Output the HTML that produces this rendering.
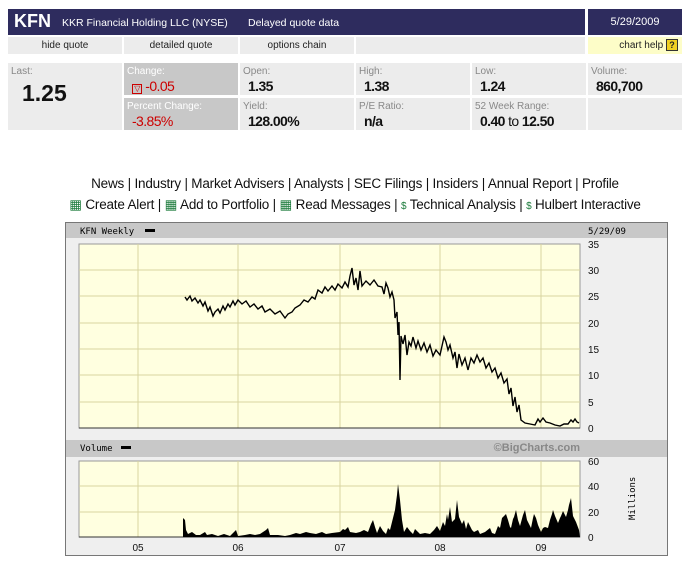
<!DOCTYPE html>
<html><head><meta charset="utf-8"><style>
*{margin:0;padding:0;box-sizing:border-box}
body{width:682px;height:566px;background:#fff;font-family:"Liberation Sans",sans-serif;position:relative;overflow:hidden}
.a{position:absolute}
.hdr{left:8px;top:9px;width:577px;height:26px;background:#2e2c5e;color:#fff}
.dt{left:588px;top:9px;width:94px;height:26px;background:#2e2c5e;color:#fff;font-size:11px;text-align:center;line-height:26px}
.nav{top:37px;height:17px;background:#ececec;font-size:10px;color:#222;text-align:center;line-height:17px}
.cell{background:#ececec;height:32px}
.lbl{font-size:10px;color:#888;position:absolute;left:3px;top:3px}
.val{font-size:14px;color:#111;position:absolute;left:8px;top:15px;font-weight:bold;letter-spacing:-0.6px}
.links{left:14px;width:682px;text-align:center;font-size:13.5px;color:#111;letter-spacing:-0.2px}
.mono{font-family:"DejaVu Sans Mono","Liberation Mono",monospace;font-size:9px;color:#111}
.g{color:#1a7a3a}
</style></head><body>
<div class="a hdr"><span style="position:absolute;left:6px;top:2px;font-size:18px;font-weight:bold">KFN</span><span style="position:absolute;left:54px;top:8px;font-size:10.5px">KKR Financial Holding LLC (NYSE)</span><span style="position:absolute;left:240px;top:8px;font-size:10.5px">Delayed quote data</span></div>
<div class="a dt">5/29/2009</div>
<div class="a nav" style="left:8px;width:114px">hide quote</div>
<div class="a nav" style="left:124px;width:114px">detailed quote</div>
<div class="a nav" style="left:240px;width:114px">options chain</div>
<div class="a nav" style="left:356px;width:229px"></div>
<div class="a nav" style="left:588px;width:94px;background:#fdfdc8;text-align:right;padding-right:4px">chart help <span style="display:inline-block;width:12px;height:12px;background:#f0d020;border:1px solid #333;font-weight:bold;font-size:9px;line-height:10px;text-align:center;vertical-align:middle">?</span></div>

<div class="a cell" style="left:8px;top:63px;width:114px;height:67px"><span class="lbl">Last:</span><span style="position:absolute;left:14px;top:17px;font-size:23px;font-weight:bold;color:#111">1.25</span></div>
<div class="a cell" style="left:124px;top:63px;width:114px;background:#c8c8c8"><span class="lbl" style="color:#fff">Change:</span><span class="val" style="color:#c00;font-weight:normal"><span style="display:inline-block;width:10px;height:10px;border:1px solid #c00;font-size:8px;line-height:8px;text-align:center">▽</span> -0.05</span></div>
<div class="a cell" style="left:124px;top:98px;width:114px;background:#c8c8c8"><span class="lbl" style="color:#fff">Percent Change:</span><span class="val" style="color:#c00;font-weight:normal">-3.85%</span></div>
<div class="a cell" style="left:240px;top:63px;width:114px"><span class="lbl">Open:</span><span class="val">1.35</span></div>
<div class="a cell" style="left:240px;top:98px;width:114px"><span class="lbl">Yield:</span><span class="val">128.00%</span></div>
<div class="a cell" style="left:356px;top:63px;width:114px"><span class="lbl">High:</span><span class="val">1.38</span></div>
<div class="a cell" style="left:356px;top:98px;width:114px"><span class="lbl">P/E Ratio:</span><span class="val">n/a</span></div>
<div class="a cell" style="left:472px;top:63px;width:114px"><span class="lbl">Low:</span><span class="val">1.24</span></div>
<div class="a cell" style="left:472px;top:98px;width:114px"><span class="lbl">52 Week Range:</span><span class="val">0.40 <span style="font-weight:normal">to</span> 12.50</span></div>
<div class="a cell" style="left:588px;top:63px;width:94px"><span class="lbl">Volume:</span><span class="val">860,700</span></div>
<div class="a cell" style="left:588px;top:98px;width:94px"></div>

<div class="a links" style="top:176px">News | Industry | Market Advisers | Analysts | SEC Filings | Insiders | Annual Report | Profile</div>
<div class="a links" style="top:197px"><span class="g">▦</span> Create Alert | <span class="g">▦</span> Add to Portfolio | <span class="g">▦</span> Read Messages | <span class="g" style="font-size:10px">$</span> Technical Analysis | <span class="g" style="font-size:10px">$</span> Hulbert Interactive</div>

<svg class="a" style="left:0;top:0" width="682" height="566">
<rect x="65.5" y="222.5" width="602" height="333" fill="#efefef" stroke="#777"/>
<rect x="66" y="223" width="601" height="15" fill="#c8c8c8"/>
<rect x="66" y="440" width="601" height="17" fill="#c8c8c8"/>
<rect x="79" y="244" width="501" height="184" fill="#ffffe0" stroke="#999"/>
<rect x="79" y="461" width="501" height="76" fill="#ffffe0" stroke="#999"/>
<g stroke="#d8d4a0" stroke-width="1">
<line x1="138" y1="244" x2="138" y2="428"/><line x1="238" y1="244" x2="238" y2="428"/><line x1="340" y1="244" x2="340" y2="428"/><line x1="440" y1="244" x2="440" y2="428"/><line x1="541" y1="244" x2="541" y2="428"/>
<line x1="79" y1="270" x2="580" y2="270"/><line x1="79" y1="296" x2="580" y2="296"/><line x1="79" y1="323" x2="580" y2="323"/><line x1="79" y1="349" x2="580" y2="349"/><line x1="79" y1="375" x2="580" y2="375"/><line x1="79" y1="402" x2="580" y2="402"/>
<line x1="138" y1="461" x2="138" y2="537"/><line x1="238" y1="461" x2="238" y2="537"/><line x1="340" y1="461" x2="340" y2="537"/><line x1="440" y1="461" x2="440" y2="537"/><line x1="541" y1="461" x2="541" y2="537"/>
<line x1="79" y1="486" x2="580" y2="486"/><line x1="79" y1="512" x2="580" y2="512"/>
</g>
<line x1="79" y1="428" x2="580" y2="428" stroke="#333"/>
<line x1="79" y1="537" x2="580" y2="537" stroke="#333"/>
<polyline fill="none" stroke="#000" stroke-width="1.4" points="185,297 187,300 190,296 192,301 195,298 198,303 200,300 203,306 205,302 208,311 210,307 213,316 215,312 218,309 220,313 223,306 225,310 228,304 230,307 233,301 235,305 238,300 242,304 246,301 250,307 254,304 258,309 262,306 265,312 270,309 275,314 280,311 285,318 288,314 292,312 295,308 300,305 304,300 308,302 312,297 315,299 318,290 322,293 325,287 328,291 332,286 335,290 338,284 342,288 345,282 348,287 350,276 352,268 354,285 356,278 358,290 360,271 362,286 366,281 370,285 374,280 378,286 382,287 384,294 386,283 388,288 390,297 392,292 394,300 395,318 397,312 398,335 399,322 400,380 401,336 403,344 405,335 407,355 409,342 411,346 413,337 416,348 418,341 421,350 424,343 427,352 430,345 433,356 436,350 440,355 442,346 444,337 446,342 448,350 450,345 453,358 455,352 457,368 459,354 462,365 465,358 468,370 471,358 474,363 477,355 480,362 483,358 486,368 489,363 492,372 495,368 498,378 501,373 504,383 507,379 509,394 511,388 513,406 515,397 517,412 519,405 521,420 525,423 530,424 535,425 538,419 540,422 543,418 546,422 550,423 555,425 560,426 564,424 568,424 571,420 573,422 575,419 577,422 579,423"/>
<path fill="#000" d="M183,537 L183,518 L185,520 L186,530 L188,534 L192,532 L196,535 L200,535 L205,532 L207,535 L212,534 L218,536 L224,534 L230,536 L236,530 L238,536 L245,535 L250,534 L255,535 L260,534 L266,530 L268,528 L270,535 L278,535 L285,536 L290,535 L296,533 L300,534 L306,532 L310,533 L316,534 L322,532 L326,534 L332,533 L340,532 L343,529 L345,530 L348,527 L350,532 L356,533 L360,532 L364,530 L368,532 L371,524 L373,520 L375,527 L377,533 L380,526 L383,531 L386,534 L388,528 L390,530 L392,522 L394,514 L395,510 L397,495 L398,484 L400,500 L402,520 L404,532 L407,527 L410,531 L413,534 L415,529 L418,532 L420,534 L425,533 L430,534 L434,530 L437,526 L440,531 L443,522 L445,526 L447,514 L448,520 L450,507 L452,522 L455,519 L457,500 L459,517 L462,524 L464,520 L466,529 L468,522 L470,526 L472,530 L474,532 L478,530 L480,534 L485,532 L490,528 L492,533 L495,534 L498,526 L500,528 L502,518 L503,517 L506,514 L508,520 L510,527 L511,528 L513,519 L514,517 L516,510 L518,520 L520,526 L523,515 L525,510 L527,520 L529,524 L531,528 L533,518 L534,514 L536,518 L538,525 L541,532 L543,528 L545,527 L548,528 L550,520 L552,514 L553,510 L555,516 L558,523 L560,518 L561,516 L563,511 L566,517 L568,510 L569,505 L571,498 L573,516 L576,522 L579,530 L580,537 Z"/>
<rect x="145" y="229" width="10" height="3" fill="#000"/>
<rect x="121" y="446" width="10" height="3" fill="#000"/>
<text x="80" y="234" class="mono">KFN Weekly</text>
<text x="588" y="234" class="mono">5/29/09</text>
<text x="80" y="451" class="mono">Volume</text>
<text x="580" y="451" text-anchor="end" font-family="Liberation Sans" font-weight="bold" font-size="11" fill="#888">©BigCharts.com</text>
<g font-family="Liberation Sans" font-size="10" fill="#111">
<text x="588" y="248">35</text><text x="588" y="274">30</text><text x="588" y="300">25</text><text x="588" y="327">20</text><text x="588" y="353">15</text><text x="588" y="379">10</text><text x="588" y="406">5</text><text x="588" y="432">0</text>
<text x="588" y="465">60</text><text x="588" y="490">40</text><text x="588" y="516">20</text><text x="588" y="541">0</text>
<text x="138" y="551" text-anchor="middle">05</text><text x="238" y="551" text-anchor="middle">06</text><text x="340" y="551" text-anchor="middle">07</text><text x="440" y="551" text-anchor="middle">08</text><text x="541" y="551" text-anchor="middle">09</text>
</g>
<text transform="translate(635,520) rotate(-90)" class="mono" font-size="10">Millions</text>
</svg>
</body></html>
